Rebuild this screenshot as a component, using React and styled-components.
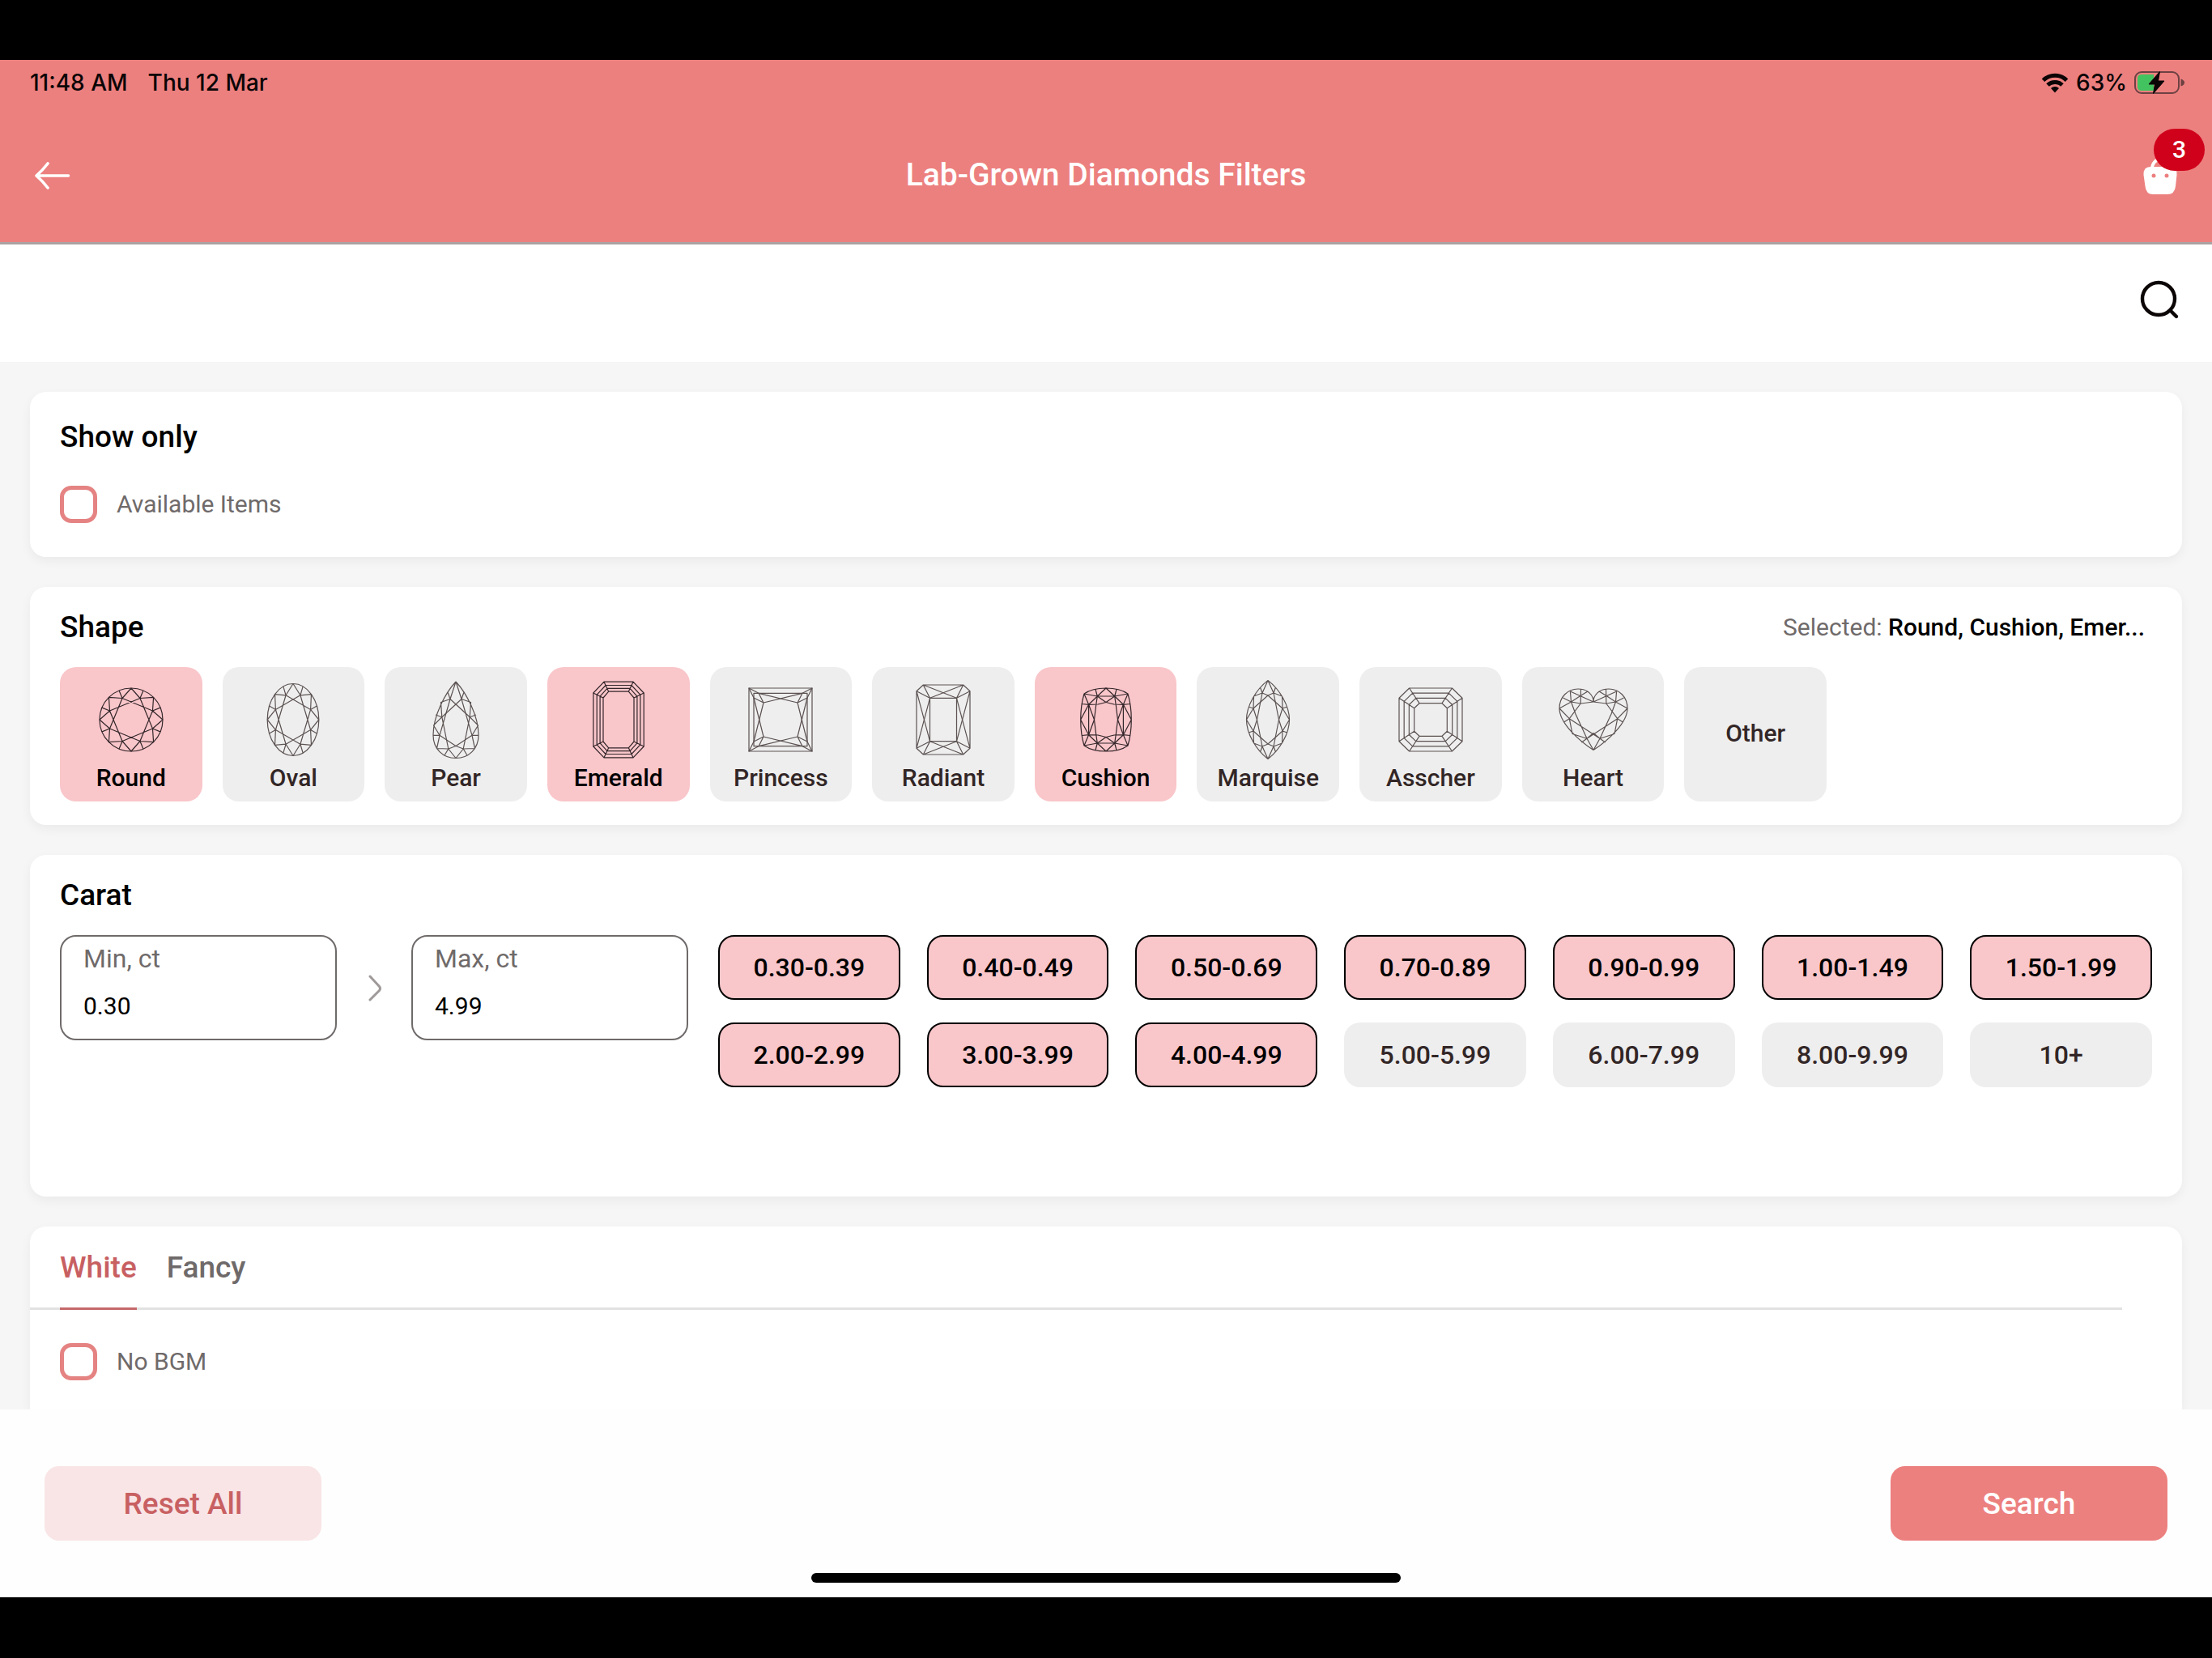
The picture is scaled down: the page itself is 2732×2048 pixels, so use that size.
import React, { useState } from "react";
import styled, { createGlobalStyle } from "styled-components";

const GlobalStyle = createGlobalStyle`
  *, *::before, *::after { box-sizing: border-box; }
  html, body { margin: 0; padding: 0; background: #000; }
  body, button, input { font-family: Roboto, "Liberation Sans", sans-serif; }
  h1, h2, p { margin: 0; font-weight: 500; }
`;

const Screen = styled.div`
  display: flex;
  flex-direction: column;
  height: 100vh;
  padding: 74px 0 75px;
  background: #000;
`;

/* Top bar */

const TopBar = styled.header`
  background: #ec807f;
  border-bottom: 3px solid #aaa3a3;
`;

const StatusBar = styled.div`
  display: flex;
  align-items: center;
  justify-content: space-between;
  height: 55px;
  margin-bottom: 3px;
  padding: 0 34px 0 37px;
  font: 500 28px/34px Inter, sans-serif;
  color: #0b0506;
`;

const StatusGroup = styled.div`
  display: flex;
  align-items: center;
  gap: ${(p) => p.$gap}px;
`;

const TitleRow = styled.div`
  display: grid;
  grid-template-columns: 1fr auto 1fr;
  align-items: center;
  height: 167px;
  padding: 0 40px;
`;

const Title = styled.h1`
  font-size: 39px;
  line-height: 46px;
  color: #fff;
`;

const IconButton = styled.button`
  display: flex;
  position: relative;
  justify-self: ${(p) => p.$side || "start"};
  padding: 0;
  border: 0;
  background: none;
  cursor: pointer;
`;

const Badge = styled.span`
  position: absolute;
  top: -31px;
  right: -31px;
  width: 63px;
  height: 52px;
  border-radius: 26px;
  background: #d0021b;
  font-size: 30px;
  font-weight: 500;
  line-height: 52px;
  text-align: center;
  color: #fff;
`;

const SearchBar = styled.div`
  display: flex;
  align-items: center;
  justify-content: flex-end;
  height: 145px;
  padding: 0 40px 10px;
  background: #fff;
`;

/* Cards */

const Content = styled.main`
  display: flex;
  flex: 1;
  flex-direction: column;
  gap: 37px;
  min-height: 0;
  padding: 37px 37px 0;
  overflow: hidden;
  background: #f6f6f6;
`;

const Card = styled.section`
  padding: ${(p) => p.$padding};
  border-radius: 20px;
  background: #fff;
  box-shadow: 0 5px 14px rgba(0, 0, 0, 0.05);
`;

const OpenCard = styled(Card)`
  flex: 1;
  border-radius: 20px 20px 0 0;
`;

const CardHead = styled.div`
  display: flex;
  align-items: center;
  justify-content: space-between;
  padding-right: 9px;
`;

const Heading = styled.h2`
  font-size: 37px;
  line-height: 44px;
  color: #000;
`;

const Selected = styled.p`
  font-size: 30px;
  font-weight: 400;
  line-height: 36px;
  color: #6f6a6a;

  strong {
    font-weight: 500;
    color: #000;
  }
`;

const CheckLabel = styled.label`
  display: flex;
  align-items: center;
  gap: 24px;
  margin-top: ${(p) => p.$top}px;
  font-size: 30px;
  line-height: 36px;
  color: #6f6a6a;
`;

const CheckBox = styled.input`
  appearance: none;
  width: 46px;
  height: 46px;
  margin: 0;
  border: 5px solid #e58383;
  border-radius: 14px;
  background: #fff;

  &:checked {
    background: #e58383;
  }
`;

/* Shape */

const ShapeGrid = styled.div`
  display: grid;
  grid-template-columns: repeat(11, 1fr);
  gap: 25px;
  max-width: 2182px;
  margin-top: 27px;
`;

const ShapeTile = styled.button`
  display: flex;
  flex-direction: column;
  align-items: center;
  justify-content: center;
  gap: 2px;
  height: 166px;
  padding: ${(p) => (p.$gem ? "2px 0 0" : "0 0 2px")};
  border: 0;
  border-radius: 20px;
  background: ${(p) => (p.$on ? "#f9c6ca" : "#eeeeee")};
  font-size: 30px;
  font-weight: 500;
  line-height: 36px;
  color: ${(p) => (p.$on ? "#000" : "#322626")};
  cursor: pointer;
`;

const GemSvg = styled.svg`
  display: block;
  fill: none;
  stroke: ${(p) => (p.$on ? "#33262a" : "#5c5252")};
  stroke-width: 1.2;
  stroke-linejoin: round;
`;

/* Carat */

const CaratRow = styled.div`
  display: flex;
  align-items: flex-start;
  gap: 37px;
  margin-top: 27px;
`;

const Range = styled.div`
  display: grid;
  grid-template-columns: 342px 92px 342px;
  align-items: center;
  justify-items: center;
`;

const Field = styled.label`
  display: flex;
  flex-direction: column;
  justify-content: space-between;
  width: 100%;
  height: 130px;
  padding: 8px 27px 22px;
  border: 2px solid #6f6a6a;
  border-radius: 20px;
  font-size: 32px;
  line-height: 38px;
  color: #6f6a6a;
`;

const FieldInput = styled.input`
  width: 100%;
  height: 36px;
  padding: 0;
  border: 0;
  outline: 0;
  background: none;
  font-size: 30px;
  line-height: 36px;
  color: #000;
`;

const ChipGrid = styled.div`
  display: grid;
  flex: 1;
  grid-template-columns: repeat(7, 1fr);
  gap: 28px 33px;
`;

const Chip = styled.button`
  height: 80px;
  padding: 0;
  border: ${(p) => (p.$on ? "2px solid #000" : "0")};
  border-radius: 20px;
  background: ${(p) => (p.$on ? "#f9c6ca" : "#eeeeee")};
  font-size: 32px;
  font-weight: 500;
  line-height: 38px;
  color: ${(p) => (p.$on ? "#000" : "#322626")};
  cursor: pointer;
`;

/* Colour */

const TabList = styled.div`
  display: flex;
  gap: 37px;
  margin-right: 74px;
  padding: 29px 37px 0;
  box-shadow: inset 0 -3px #e2e2e2;
`;

const Tab = styled.button`
  padding: 0 0 27px;
  border: 0;
  border-bottom: 3px solid ${(p) => (p.$on ? "#c4696b" : "transparent")};
  background: none;
  font-size: 37px;
  font-weight: 500;
  line-height: 44px;
  color: ${(p) => (p.$on ? "#c86062" : "#6f6a6a")};
  cursor: pointer;
`;

const TabPanel = styled.div`
  padding: 0 37px;
`;

/* Footer */

const Footer = styled.footer`
  display: flex;
  flex-direction: column;
  align-items: center;
  padding: 70px 55px 18px;
  background: #fefefe;
`;

const Actions = styled.div`
  display: flex;
  justify-content: space-between;
  width: 100%;
`;

const ActionButton = styled.button`
  width: 342px;
  height: 92px;
  padding: 2px 0 0;
  border: 0;
  border-radius: 18px;
  background: ${(p) => (p.$primary ? "#ec807f" : "#f9e5e6")};
  font-size: 37px;
  font-weight: 500;
  line-height: 44px;
  color: ${(p) => (p.$primary ? "#fff" : "#c86062")};
  cursor: pointer;
`;

const HomeIndicator = styled.div`
  width: 728px;
  height: 12px;
  margin-top: 40px;
  border-radius: 6px;
  background: #000;
`;

/* Gem drawings. All are centred on 0,0. */

const seg = (list) => list.map(([a, b, c, d]) => `M${a} ${b}L${c} ${d}`).join("");

function brilliantPath(rx, ry) {
  const at = (deg, k) => {
    const t = (deg * Math.PI) / 180;
    return [(rx * k * Math.sin(t)).toFixed(2), (-ry * k * Math.cos(t)).toFixed(2)];
  };
  let d = "";
  for (let i = 0; i < 8; i++) {
    const main = at(i * 45, 1);
    const mid = at(i * 45 + 22.5, 0.735);
    const next = at(i * 45 + 45, 1);
    const rim = at(i * 45 + 22.5, 1);
    const skip = at(i * 45 + 112.5, 0.735);
    d += `M${main}L${mid}L${next}M${mid}L${rim}M${mid}L${skip}`;
  }
  return d;
}

function Brilliant({ rx, ry }) {
  return (
    <>
      <ellipse rx={rx} ry={ry} />
      <path d={brilliantPath(rx, ry)} />
    </>
  );
}

/* Step cuts: octagons nested between an outer and an inner ring. */
function StepCut({ outer, inner, steps }) {
  const ring = (t) => {
    const [x, y, cx, cy] = outer.map((v, i) => v + (inner[i] - v) * t);
    return `M${-cx} ${-y}L${cx} ${-y}L${x} ${-cy}L${x} ${cy}L${cx} ${y}L${-cx} ${y}L${-x} ${cy}L${-x} ${-cy}Z`;
  };
  let spokes = "";
  for (const sx of [-1, 1]) {
    for (const sy of [-1, 1]) {
      spokes += `M${sx * outer[2]} ${sy * outer[1]}L${sx * inner[2]} ${sy * inner[1]}`;
      spokes += `M${sx * outer[0]} ${sy * outer[3]}L${sx * inner[0]} ${sy * inner[3]}`;
    }
  }
  return <path d={steps.map(ring).join("") + spokes} />;
}

function Mirror({ d, both }) {
  return (
    <>
      <path d={d} />
      <path d={d} transform="scale(-1 1)" />
      {both && <path d={d} transform="scale(1 -1)" />}
      {both && <path d={d} transform="scale(-1 -1)" />}
    </>
  );
}

const PEAR =
  "M0 -47C-13 -33 -28 -5 -28 19C-28 36 -16 47.5 0 47.5" +
  "M0 -47L-7 -25.5M-10 -34L-7 -25.5L-18.5 -21.5L-17.2 -3.3M-25 -6L-17.2 -3.3L-27.5 7L-20 19.3M-28 19.3L-20 19.3L-23.5 35.5L-9.2 36M-14 44L-9.2 36L0 47.5" +
  "M-7 -25.5L17.2 -3.3M-7 -25.5L-20 19.3M-17.2 -3.3L-9.2 36L0 32.5L20 19.3";

const CUSHION =
  "M0 -39C-11 -39 -20 -37 -27 -32C-30 -22 -31.3 -11 -31.3 0" +
  "M0 -39L-10.7 -29L0 -29M-13 -37.5L-10.7 -29L-27 -32L-21.4 -18.7L-10.7 -29M-29.6 -19.5L-21.4 -18.7L-31.3 0M-21.4 -18.7L-21.4 0" +
  "M-21.4 -18.7L-10 -19L0 -21.5L10.7 -29M-10.7 -29L-12.3 -18L-14.5 0L-21.4 18.7";

const MARQUISE =
  "M0 -48.6C-15 -37 -26.5 -17 -26.5 0" +
  "M0 -48.6L-7 -33M-9.5 -40L-7 -33L-17.5 -29L-18 -14M-24 -16L-18 -14L-26.5 0" +
  "M-7 -33L0 -30L18 -14M-7 -33L-13.5 0L-18 14";

const PRINCESS =
  "M-39 -39L-27 -32.7L-21 -21L-33 -27ZM-21 -21L27 -32.7M-21 -21L-33 27";

const RADIANT =
  "M0 -43L-24.7 -43L-33 -35.3L-33 0M0 -26.7L-16.5 -26.7L-16.5 0" +
  "M-24.7 -43L-16.5 -26.7L-33 -35.3M-24.7 -43L16.5 -26.7M-33 -35.3L-16.5 26.7";

const HEART =
  "M0 -25C-3 -34 -10 -38 -19 -38C-32 -38 -42 -28 -42 -14C-42 4 -18 26 0 37.5" +
  seg([
    [-28.6, -35, 0, -22],
    [-15.5, -38, -15.8, -20],
    [-7, -35, -15.3, -30],
    [-15.3, -30, -27.5, -22],
    [-28.6, -35, -27.5, -22],
    [-37.5, -27, -27.5, -22],
    [-27.5, -22, -42, -14],
    [-42, -14, -29.7, -1.3],
    [-36, 2.7, -29.7, -1.3],
    [-29.7, -1.3, -26, 17.5],
    [-29.7, -1.3, -15.8, -20],
    [-29.7, -1.3, 8, 23.3],
    [-27.5, -22, -15.8, -20],
    [-15.8, -20, 0, -22],
    [-27.5, -22, -22, -7],
    [-22, -7, -8, 23.3],
    [-26, 17.5, -8, 23.3],
    [-14.7, 28, -8, 23.3],
    [0, 37.5, -8, 23.3],
    [0, -25, 0, -22],
    [0, 16.5, 8, 23.3],
  ]);

const GEMS = {
  Round: <Brilliant rx={39} ry={39} />,
  Oval: <Brilliant rx={31.8} ry={44.5} />,
  Pear: <Mirror d={PEAR} />,
  Emerald: (
    <StepCut outer={[31.2, 46.8, 18, 33]} inner={[19, 34.8, 12.3, 27]} steps={[0, 0.36, 0.68, 1]} />
  ),
  Princess: (
    <>
      <rect x="-39" y="-39" width="78" height="78" />
      <rect x="-33" y="-32.7" width="66" height="65.4" />
      <Mirror d={PRINCESS} both />
    </>
  ),
  Radiant: <Mirror d={RADIANT} both />,
  Cushion: <Mirror d={CUSHION} both />,
  Marquise: <Mirror d={MARQUISE} both />,
  Asscher: (
    <StepCut outer={[39, 39, 26.4, 26.7]} inner={[20.3, 20.3, 14, 14.3]} steps={[0, 0.33, 0.66, 1]} />
  ),
  Heart: <Mirror d={HEART} />,
};

const SHAPES = [...Object.keys(GEMS), "Other"];

const CARATS = [
  "0.30-0.39", "0.40-0.49", "0.50-0.69", "0.70-0.89", "0.90-0.99", "1.00-1.49", "1.50-1.99",
  "2.00-2.99", "3.00-3.99", "4.00-4.99", "5.00-5.99", "6.00-7.99", "8.00-9.99", "10+",
];

function WifiIcon() {
  return (
    <svg width="34" height="26" viewBox="0 0 34 26" fill="none" stroke="#0b0506" strokeWidth="5">
      <path d="M2.5 10.2A20.5 20.5 0 0 1 31.5 10.2" />
      <path d="M8 16A13 13 0 0 1 26 16" />
      <path d="M12 20A7.2 7.2 0 0 1 22 20L17 25.500Z" fill="#0b0506" stroke="none" />
    </svg>
  );
}

function BatteryIcon() {
  return (
    <svg width="62" height="30" viewBox="0 0 62 30">
      <rect x="1" y="2" width="54" height="26" rx="8" fill="none" stroke="#6d4142" strokeWidth="2" />
      <path d="M57.5 10.5C60.5 11.5 62 13 62 15C62 17 60.5 18.5 57.5 19.5Z" fill="#6d4142" />
      <path d="M9 5H24V25H9Q4 25 4 20V10Q4 5 9 5Z" fill="#43c35f" />
      <path
        d="M31.500 1.500L18 17H25.500L23.500 28.500L37 13H29.500Z"
        fill="#0b0506"
        stroke="#0b0506"
        strokeWidth="1"
        strokeLinejoin="round"
      />
    </svg>
  );
}

function ArrowIcon() {
  return (
    <svg width="50" height="36" viewBox="0 0 50 36" fill="none" stroke="#fff" strokeWidth="3.6" strokeLinecap="round" strokeLinejoin="round">
      <path d="M44.500 19H5M19 4Q12 13 5 19Q12 25 19 34" />
    </svg>
  );
}

function BagIcon() {
  return (
    <svg width="48" height="52" viewBox="0 -4 48 52">
      <path d="M14 15C14 -1 34 -1 34 15" fill="none" stroke="#fff" strokeWidth="4" />
      <path
        d="M12 12H36Q45 12 44.500 22L43 36Q42 46 33 46H15Q6.500 46 5.500 36L3.500 22Q3 12 12 12Z"
        fill="#fff"
      />
      <circle cx="16" cy="23" r="2.500" fill="#ec807f" />
      <circle cx="32" cy="23" r="2.500" fill="#ec807f" />
    </svg>
  );
}

function SearchIcon() {
  return (
    <svg width="50" height="50" viewBox="0 0 50 50" fill="none" stroke="#0b0506" strokeWidth="4.4" strokeLinecap="round">
      <circle cx="24" cy="24" r="20" />
      <path d="M39 39L46 46" />
    </svg>
  );
}

function ChevronIcon() {
  return (
    <svg width="20" height="34" viewBox="0 0 20 34" fill="none" stroke="#9f9999" strokeWidth="3" strokeLinecap="round" strokeLinejoin="round">
      <path d="M5 3L16.500 15.500Q18.500 18 16.500 20.500L5 32" />
    </svg>
  );
}

function toggle(list, name) {
  return list.includes(name) ? list.filter((n) => n !== name) : [...list, name];
}

export default function App() {
  const [shapes, setShapes] = useState(["Round", "Cushion", "Emerald"]);
  const [carats, setCarats] = useState(CARATS.slice(0, 10));
  const [tab, setTab] = useState("White");

  return (
    <>
      <GlobalStyle />
      <Screen>
        <TopBar>
          <StatusBar>
            <StatusGroup $gap={25}>
              <span>11:48 AM</span>
              <span>Thu 12 Mar</span>
            </StatusGroup>
            <StatusGroup $gap={9}>
              <WifiIcon />
              <span>63%</span>
              <BatteryIcon />
            </StatusGroup>
          </StatusBar>
          <TitleRow>
            <IconButton type="button" aria-label="Back">
              <ArrowIcon />
            </IconButton>
            <Title>Lab-Grown Diamonds Filters</Title>
            <IconButton type="button" aria-label="Bag" $side="end">
              <BagIcon />
              <Badge>3</Badge>
            </IconButton>
          </TitleRow>
        </TopBar>
        <SearchBar>
          <IconButton type="button" aria-label="Find">
            <SearchIcon />
          </IconButton>
        </SearchBar>

        <Content>
          <Card $padding="34px 37px 42px">
            <Heading>Show only</Heading>
            <CheckLabel $top={38}>
              <CheckBox type="checkbox" />
              Available Items
            </CheckLabel>
          </Card>

          <Card $padding="28px 37px 29px">
            <CardHead>
              <Heading>Shape</Heading>
              <Selected>
                Selected: <strong>Round, Cushion, Emer...</strong>
              </Selected>
            </CardHead>
            <ShapeGrid>
              {SHAPES.map((name) => {
                const on = shapes.includes(name);
                return (
                  <ShapeTile
                    key={name}
                    type="button"
                    $on={on}
                    $gem={Boolean(GEMS[name])}
                    aria-pressed={on}
                    onClick={() => setShapes(toggle(shapes, name))}
                  >
                    {GEMS[name] && (
                      <GemSvg $on={on} width="100" height="104" viewBox="-50 -52 100 104">
                        {GEMS[name]}
                      </GemSvg>
                    )}
                    {name}
                  </ShapeTile>
                );
              })}
            </ShapeGrid>
          </Card>

          <Card $padding="28px 37px 135px">
            <Heading>Carat</Heading>
            <CaratRow>
              <Range>
                <Field>
                  Min, ct
                  <FieldInput type="text" defaultValue="0.30" />
                </Field>
                <ChevronIcon />
                <Field>
                  Max, ct
                  <FieldInput type="text" defaultValue="4.99" />
                </Field>
              </Range>
              <ChipGrid>
                {CARATS.map((name) => {
                  const on = carats.includes(name);
                  return (
                    <Chip
                      key={name}
                      type="button"
                      $on={on}
                      aria-pressed={on}
                      onClick={() => setCarats(toggle(carats, name))}
                    >
                      {name}
                    </Chip>
                  );
                })}
              </ChipGrid>
            </CaratRow>
          </Card>

          <OpenCard $padding="0">
            <TabList role="tablist">
              {["White", "Fancy"].map((name) => (
                <Tab
                  key={name}
                  type="button"
                  role="tab"
                  aria-selected={tab === name}
                  $on={tab === name}
                  onClick={() => setTab(name)}
                >
                  {name}
                </Tab>
              ))}
            </TabList>
            <TabPanel role="tabpanel">
              <CheckLabel $top={41}>
                <CheckBox type="checkbox" />
                No BGM
              </CheckLabel>
            </TabPanel>
          </OpenCard>
        </Content>

        <Footer>
          <Actions>
            <ActionButton type="button">Reset All</ActionButton>
            <ActionButton type="button" $primary>
              Search
            </ActionButton>
          </Actions>
          <HomeIndicator />
        </Footer>
      </Screen>
    </>
  );
}
